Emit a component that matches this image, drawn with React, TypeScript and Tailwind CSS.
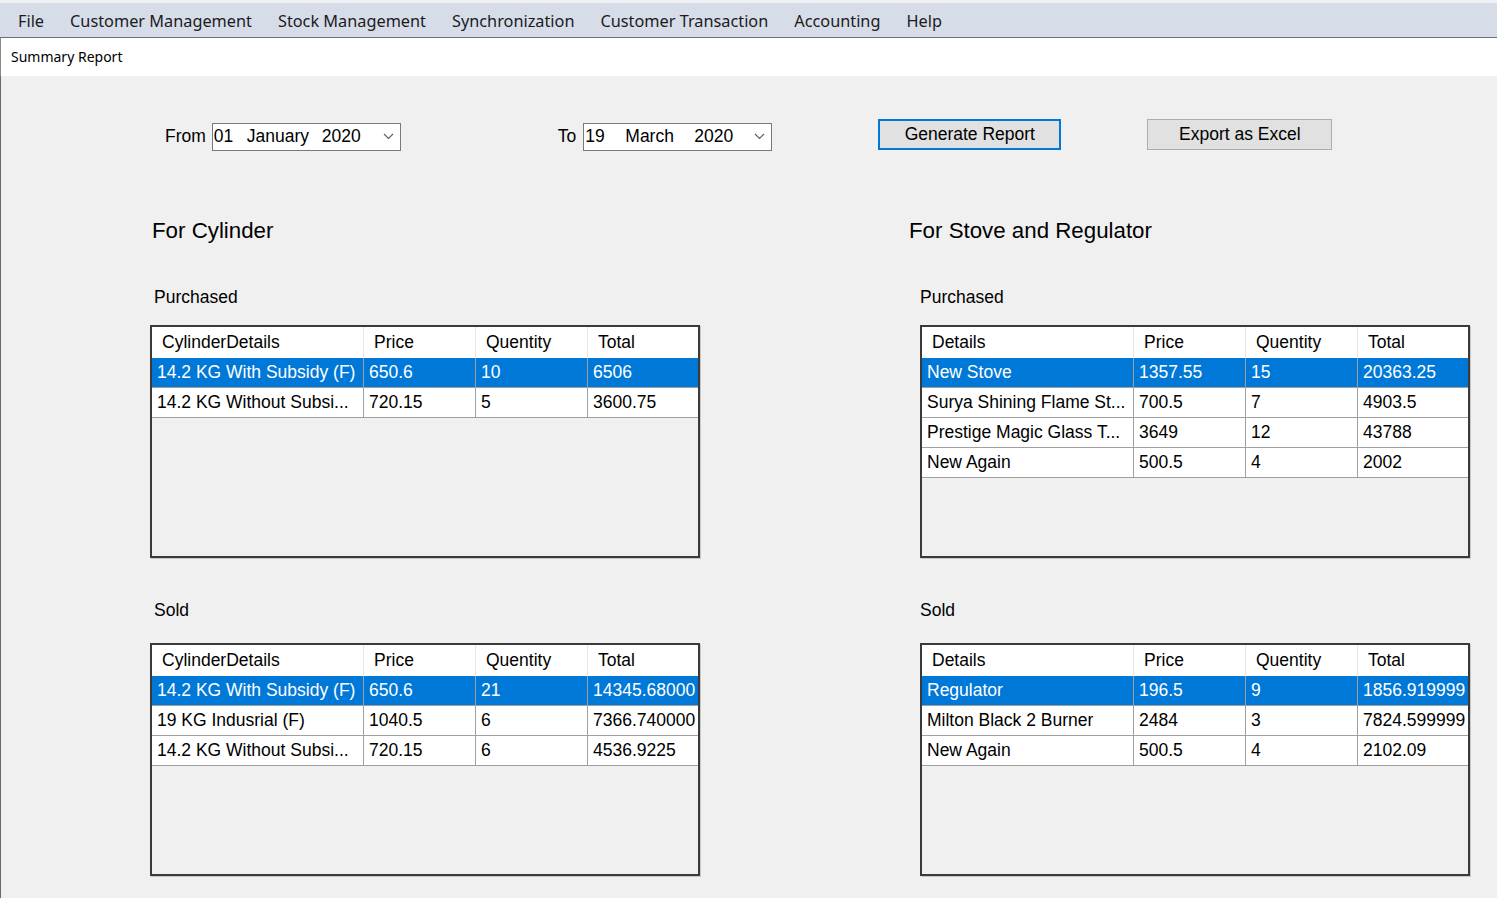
const menuItems = [
  "File",
  "Customer Management",
  "Stock Management",
  "Synchronization",
  "Customer Transaction",
  "Accounting",
  "Help",
];

type Row = string[];

interface GridProps {
  first: string;
  rows: Row[];
}

const DataGrid = ({ first, rows }: GridProps) => {
  const headers = [first, "Price", "Quentity", "Total"];
  return (
    <div className="h-[233px] w-[550px] border-2 border-[#3a3a3a] bg-[#f0f0f0] shadow-[1px_1px_0_#c8c8c8]">
      <div className="grid h-[31px] grid-cols-[212px_112px_112px_1fr] bg-white">
        {headers.map((h, i) => (
          <div
            key={h}
            className={`flex items-center overflow-hidden whitespace-nowrap pl-[10px] ${
              i < 3 ? "border-r border-[#e6e6e6]" : ""
            }`}
          >
            {h}
          </div>
        ))}
      </div>
      {rows.map((r, idx) => (
        <div
          key={idx}
          className={`grid h-[30px] grid-cols-[212px_112px_112px_1fr] border-b border-[#a0a0a0] ${
            idx === 0 ? "bg-[#0078d7] text-white" : "bg-white text-black"
          }`}
        >
          {r.map((c, i) => (
            <div
              key={i}
              className={`flex items-center overflow-hidden whitespace-nowrap pl-[5px] ${
                i < 3 ? "border-r border-[#a0a0a0]" : ""
              }`}
            >
              {c}
            </div>
          ))}
        </div>
      ))}
    </div>
  );
};

const Chevron = () => (
  <svg width="11" height="7" viewBox="0 0 11 7" className="ml-auto mr-[6px]">
    <path d="M1 1l4.5 4.5L10 1" fill="none" stroke="#606060" strokeWidth="1.2" />
  </svg>
);

const DateBox = ({ day, month, year, monthGap }: { day: string; month: string; year: string; monthGap: string }) => (
  <div className="mt-[4px] flex h-[28px] w-[189px] items-center border border-[#7a7a7a] bg-white pl-[1px]">
    <span className="w-[33px]">{day}</span>
    <span className={monthGap}>{month}</span>
    <span>{year}</span>
    <Chevron />
  </div>
);

export default function App() {
  return (
    <div className="flex h-[898px] w-[1497px] flex-col overflow-hidden bg-[#f0f0f0] font-['Liberation_Sans',Arial,sans-serif] text-[17.5px] text-black">
      <div className="h-[3px] bg-[#eef0f4]" />
      <div className="flex h-[35px] items-center border-b border-[#6f6f6f] bg-[#d7dce9] pl-[18px] pt-[2px] font-['Noto_Sans',sans-serif] text-[16.3px] text-[#1b1b1b]">
        {menuItems.map((m) => (
          <span key={m} className="mr-[26px]">
            {m}
          </span>
        ))}
      </div>
      <div className="flex h-[38px] items-center border-l border-[#8a8a8a] bg-white pb-[1px] pl-[10px] font-['Noto_Sans',sans-serif] text-[14px]">
        Summary Report
      </div>
      <div className="flex flex-1 flex-col border-l border-[#6a6a6a]">
        <div className="mt-[43px] flex h-[31px] items-center">
          <span className="ml-[164px] mr-[6px] mt-[4px]">From</span>
          <DateBox day="01" month="January" year="2020" monthGap="w-[75px]" />
          <span className="ml-[157px] mr-[7px] mt-[4px]">To</span>
          <DateBox day="19" month="March" year="2020" monthGap="ml-[7px] w-[69px]" />
          <button
            type="button"
            className="ml-[106px] h-[31px] w-[183px] border-2 border-[#0078d7] bg-[#e1e1e1]"
          >
            Generate Report
          </button>
          <button
            type="button"
            className="ml-[86px] h-[31px] w-[185px] border border-[#adadad] bg-[#e1e1e1]"
          >
            Export as Excel
          </button>
        </div>

        <div className="flex">
          <div className="ml-[149px] flex w-[550px] flex-col">
            <div className="ml-[2px] mt-[67px] h-[28px] text-[22.3px] leading-[28px]">For Cylinder</div>
            <div className="ml-[4px] mt-[41px] h-[22px] leading-[22px]">Purchased</div>
            <div className="mt-[17px]">
              <DataGrid
                first="CylinderDetails"
                rows={[
                  ["14.2 KG With Subsidy (F)", "650.6", "10", "6506"],
                  ["14.2 KG Without Subsi...", "720.15", "5", "3600.75"],
                ]}
              />
            </div>
            <div className="ml-[4px] mt-[41px] h-[22px] leading-[22px]">Sold</div>
            <div className="mt-[22px]">
              <DataGrid
                first="CylinderDetails"
                rows={[
                  ["14.2 KG With Subsidy (F)", "650.6", "21", "14345.68000"],
                  ["19 KG Indusrial (F)", "1040.5", "6", "7366.740000"],
                  ["14.2 KG Without Subsi...", "720.15", "6", "4536.9225"],
                ]}
              />
            </div>
          </div>

          <div className="ml-[220px] flex w-[550px] flex-col">
            <div className="-ml-[11px] mt-[67px] h-[28px] text-[22.3px] leading-[28px]">
              For Stove and Regulator
            </div>
            <div className="mt-[41px] h-[22px] leading-[22px]">Purchased</div>
            <div className="mt-[17px]">
              <DataGrid
                first="Details"
                rows={[
                  ["New Stove", "1357.55", "15", "20363.25"],
                  ["Surya Shining Flame St...", "700.5", "7", "4903.5"],
                  ["Prestige Magic Glass T...", "3649", "12", "43788"],
                  ["New Again", "500.5", "4", "2002"],
                ]}
              />
            </div>
            <div className="mt-[41px] h-[22px] leading-[22px]">Sold</div>
            <div className="mt-[22px]">
              <DataGrid
                first="Details"
                rows={[
                  ["Regulator", "196.5", "9", "1856.919999"],
                  ["Milton Black 2 Burner", "2484", "3", "7824.599999"],
                  ["New Again", "500.5", "4", "2102.09"],
                ]}
              />
            </div>
          </div>
        </div>
      </div>
    </div>
  );
}
